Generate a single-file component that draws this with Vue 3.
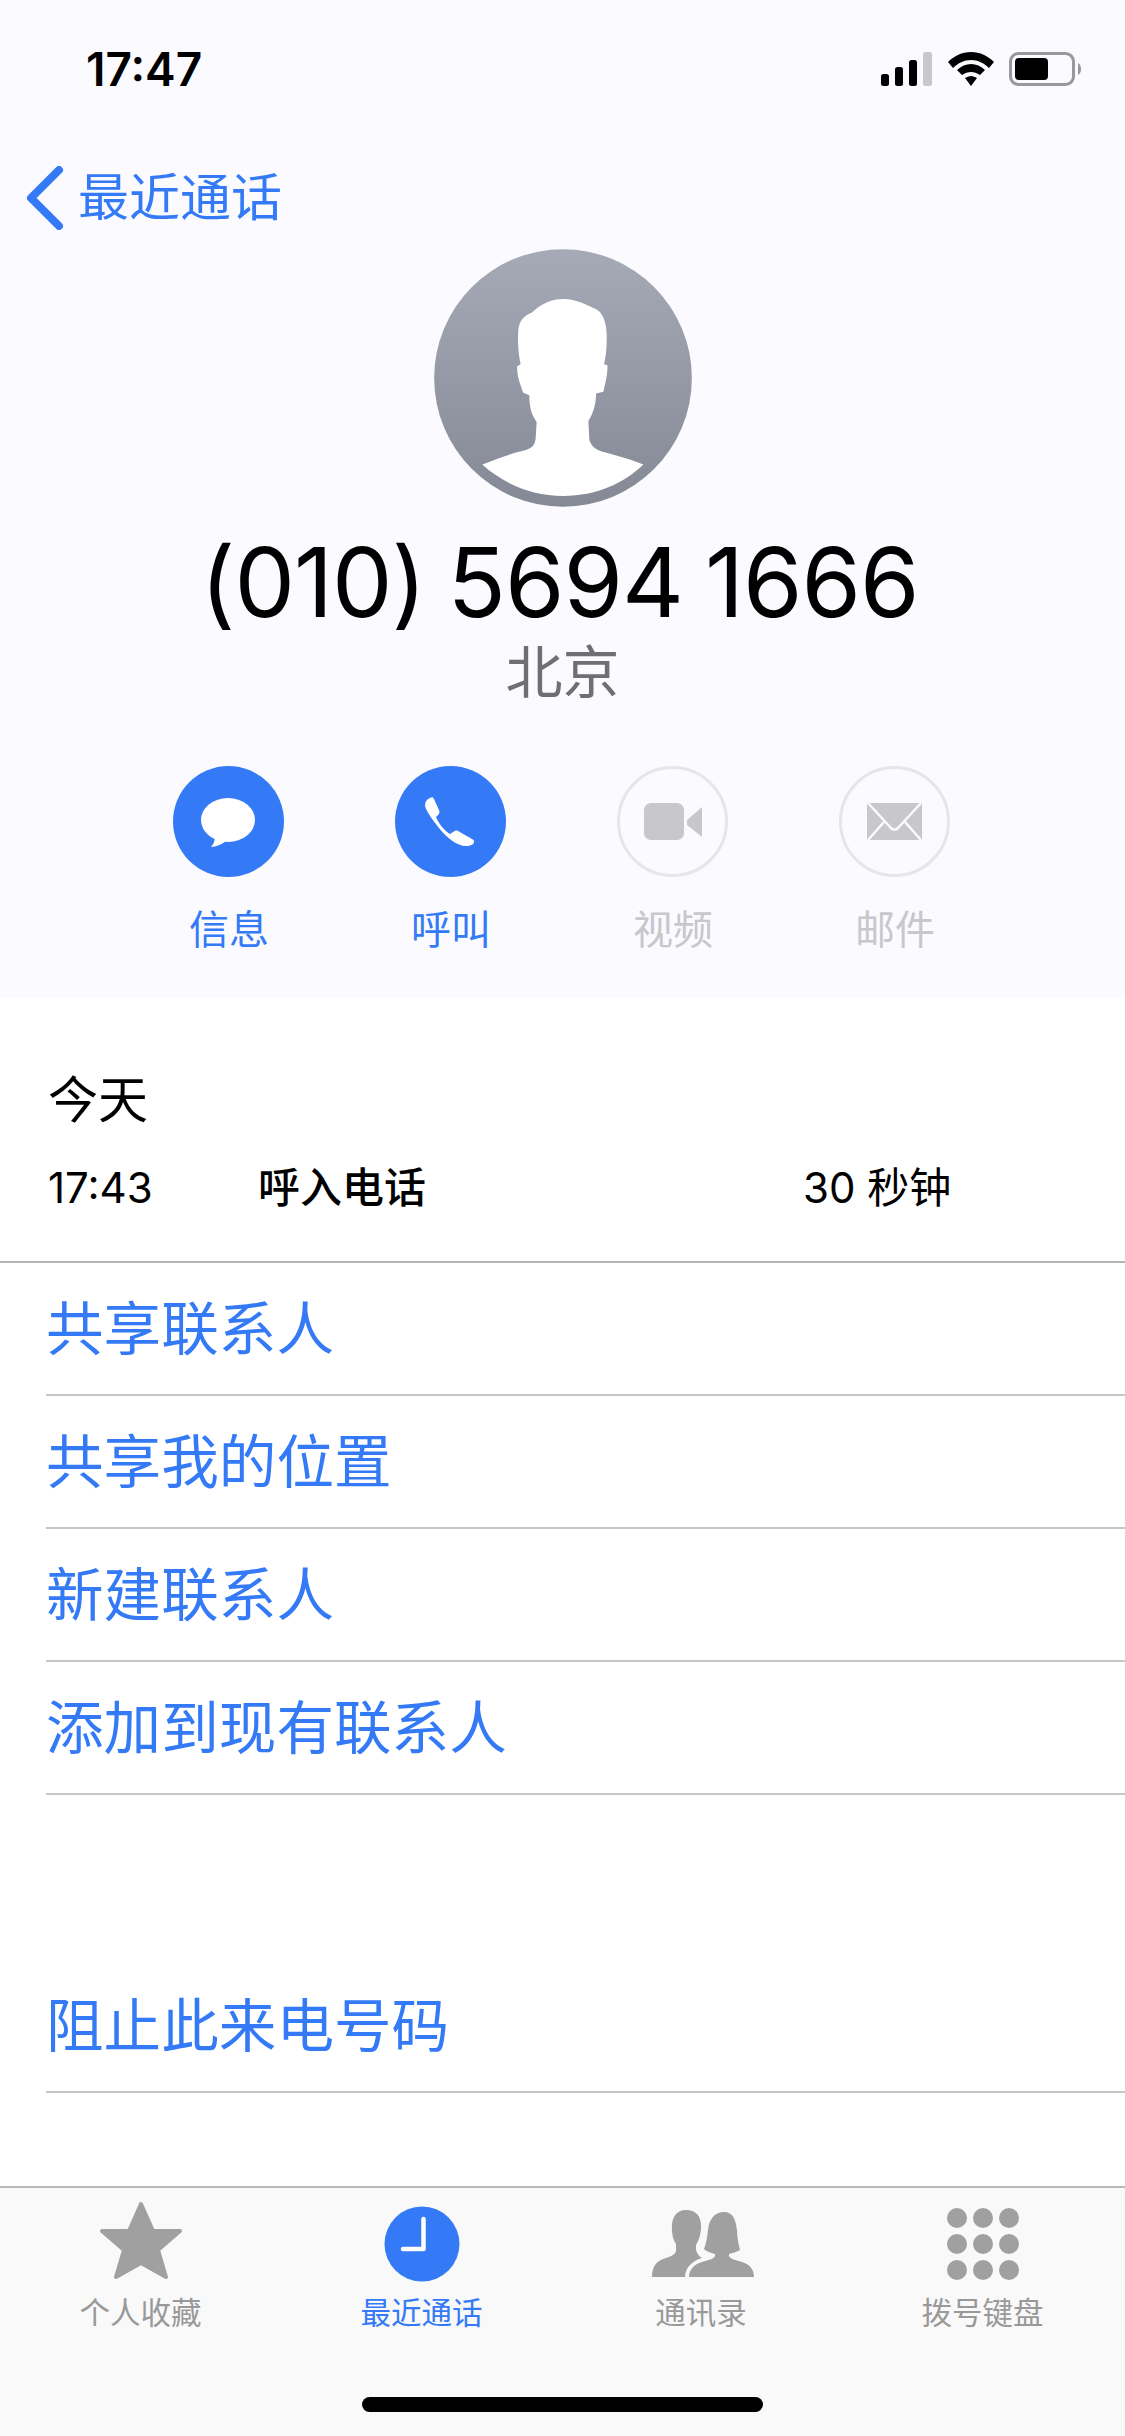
<template>
  <div class="screen">
    <header class="contact">
      <div class="status">
        <span class="clock">17:47</span>
        <div class="status-icons">
          <svg class="signal" width="52" height="34" viewBox="0 0 52 34">
            <rect x="0" y="22" width="8" height="12" rx="2.5" fill="#000" />
            <rect x="14" y="15" width="8" height="19" rx="2.5" fill="#000" />
            <rect x="28" y="8" width="8" height="26" rx="2.5" fill="#000" />
            <rect x="42" y="0" width="9" height="34" rx="2.5" fill="#c7c7cc" />
          </svg>
          <svg class="wifi" width="46" height="34" viewBox="0 0 46 34">
            <path d="M23 0C32 0 40 4 46 10L41 16C36 11 30 8 23 8S10 11 5 16L0 10C6 4 14 0 23 0Z" fill="#000" />
            <path d="M23 12C28 12 33 14 37 18L32 23C29 21 26 20 23 20S17 21 14 23L9 18C13 14 18 12 23 12Z" fill="#000" />
            <path d="M23 24C25 24 27 25 29 26L23 34L17 26C19 25 21 24 23 24Z" fill="#000" />
          </svg>
          <svg class="battery" width="73" height="34" viewBox="0 0 73 34">
            <rect x="1.5" y="1.5" width="63" height="31" rx="8" fill="none" stroke="#98989d" stroke-width="3" />
            <rect x="6" y="6" width="33" height="22" rx="4" fill="#000" />
            <path d="M69 11C71 12 72 14 72 17S71 22 69 23Z" fill="#98989d" />
          </svg>
        </div>
      </div>

      <div class="back">
        <svg width="38" height="64" viewBox="0 0 38 64">
          <path d="M33 4L5 32L33 60" fill="none" stroke="#347af6" stroke-width="8" stroke-linecap="round" stroke-linejoin="round" />
        </svg>
        <span>最近通话</span>
      </div>

      <svg class="avatar" width="258" height="258" viewBox="103 57 772 773">
        <defs>
          <linearGradient id="avatarFill" x1="0" y1="0" x2="0" y2="1">
            <stop offset="0" stop-color="#a6aab6" />
            <stop offset="1" stop-color="#858995" />
          </linearGradient>
        </defs>
        <circle cx="489" cy="443.5" r="386" fill="url(#avatarFill)" />
        <path
          d="M490 207C530 207 560 225 590 238C610 250 620 280 620 320C620 350 618 380 612 402L622 405C624 430 615 460 610 485L588 490C588 520 580 550 565 572L568 630C575 650 590 660 610 665C650 675 695 688 730 703C670 760 590 797 490 797C395 797 310 760 247 703C290 685 340 668 375 660C395 655 405 645 407 625L410 575C395 555 388 530 388 495L370 488C360 460 350 435 352 408L362 402C355 370 353 340 355 300C358 270 375 255 395 248C420 225 450 207 490 207Z"
          fill="#fff" />
      </svg>

      <div class="number">(010) 5694 1666</div>
      <div class="region">北京</div>

      <div class="actions">
        <div v-for="action in actions" :key="action.label" :class="['action', { off: !action.on }]">
          <svg width="111" height="111" viewBox="0 0 111 111">
            <circle v-if="action.on" cx="55.5" cy="55.5" r="55.5" fill="#347af6" />
            <circle v-else cx="55.5" cy="55.5" r="54" fill="none" stroke="#e5e5ea" stroke-width="3" />
            <template v-if="action.icon === 'message'">
              <ellipse cx="55" cy="54" rx="27" ry="22" fill="#fff" />
              <path d="M42 68C42 74 41 78 38 81C43 81 50 78 54 74Z" fill="#fff" />
            </template>
            <path
              v-else-if="action.icon === 'phone'"
              d="M35 32C37 31 38 31 39 33L44 44C45 46 44 48 43 49L41 51C43 57 50 65 55 68L58 66C60 65 61 64 63 65L77 73C79 74 79 75 79 76C79 78 76 80 71 80C62 80 52 72 44 62C36 52 30 43 30 39C30 36 32 33 35 32Z"
              fill="#fff" />
            <template v-else-if="action.icon === 'video'">
              <rect x="27" y="37" width="40" height="37" rx="7" fill="#c7c7cc" />
              <path d="M70 54L85 41V71L70 59Z" fill="#c7c7cc" />
            </template>
            <template v-else>
              <rect x="28" y="37" width="55" height="37" fill="#c7c7cc" />
              <path d="M29 37L52 62C54 64 57 64 59 62L82 37M29 74L45 56M82 74L66 56" fill="none" stroke="#fbfbff" stroke-width="2.5" />
            </template>
          </svg>
          <span>{{ action.label }}</span>
        </div>
      </div>
    </header>

    <section class="recent">
      <div class="day">今天</div>
      <div class="call">
        <span>17:43</span>
        <span class="call-type">呼入电话</span>
        <span>30 秒钟</span>
      </div>
    </section>

    <div class="links">
      <div v-for="link in links" :key="link" class="link"><span>{{ link }}</span></div>
    </div>
    <div class="links block">
      <div class="link"><span>阻止此来电号码</span></div>
    </div>

    <nav class="tabs">
      <div v-for="tab in tabs" :key="tab.label" :class="['tab', { active: tab.active }]">
        <svg width="110" height="88" viewBox="0 0 110 88">
          <polygon
            v-if="tab.icon === 'star'"
            points="55,6 67,33 94,33 72,52 80,79 55,65 30,79 38,52 16,33 43,33"
            fill="#a0a0a0" stroke="#a0a0a0" stroke-width="4" stroke-linejoin="round" />
          <template v-else-if="tab.icon === 'clock'">
            <circle cx="55" cy="46" r="37.5" fill="#347af6" />
            <path d="M56.5 21V51H36" fill="none" stroke="#fff" stroke-width="4.5" stroke-linecap="round" stroke-linejoin="round" />
          </template>
          <g v-else-if="tab.icon === 'people'" transform="translate(6 12)" fill="#a0a0a0">
            <path d="M34 0C44 0 49 6 49 16C49 24 47 30 44 35L44 40C45 44 48 47 50 48C40 51 33 58 33 67L0 67C0 55 6 50 14 48C20 46 24 44 24 40L24 34C21 30 20 24 20 20C19 8 24 0 34 0Z" />
            <path d="M72 2C82 2 84 12 85 20C85 28 87 35 88 40C85 42 80 43 77 44L77 46C78 49 84 50 90 52C98 54 102 60 102 67L37 67C37 60 42 54 50 52C56 50 62 49 63 46L63 44C60 43 55 42 52 39C54 34 55 28 56 20C57 10 62 2 72 2Z" />
          </g>
          <g v-else fill="#a0a0a0">
            <template v-for="y in [20, 46, 72]" :key="y">
              <circle v-for="x in [29, 55, 81]" :key="x" :cx="x" :cy="y" r="10" />
            </template>
          </g>
        </svg>
        <span>{{ tab.label }}</span>
      </div>
      <div class="home-bar"></div>
    </nav>
  </div>
</template>

<script setup>
const actions = [
  { label: '信息', icon: 'message', on: true },
  { label: '呼叫', icon: 'phone', on: true },
  { label: '视频', icon: 'video', on: false },
  { label: '邮件', icon: 'mail', on: false }
]

const links = ['共享联系人', '共享我的位置', '新建联系人', '添加到现有联系人']

const tabs = [
  { label: '个人收藏', icon: 'star' },
  { label: '最近通话', icon: 'clock', active: true },
  { label: '通讯录', icon: 'people' },
  { label: '拨号键盘', icon: 'keypad' }
]
</script>

<style>
html,
body {
  margin: 0;
  background: #fff;
}
</style>

<style scoped>
.screen {
  display: flex;
  flex-direction: column;
  width: 1125px;
  height: 2436px;
  overflow: hidden;
  background: #fff;
  font-family: Inter, "Noto Sans CJK SC", sans-serif;
  color: #000;
}

.contact {
  display: flex;
  flex-direction: column;
  align-items: center;
  height: 998px;
  background: #fbfbff;
  box-sizing: border-box;
  flex-shrink: 0;
}

.status {
  display: flex;
  justify-content: space-between;
  align-items: center;
  align-self: stretch;
  height: 40px;
  margin-top: 49px;
  padding: 0 43px 0 86px;
}

.clock {
  font-size: 46px;
  font-weight: 600;
  line-height: 40px;
}

.status-icons {
  display: flex;
  align-items: center;
  gap: 15px;
}

.back {
  display: flex;
  align-items: center;
  align-self: stretch;
  gap: 14px;
  height: 64px;
  margin-top: 77px;
  padding-left: 26px;
  font-size: 51px;
  line-height: 64px;
  color: #347af6;
}

.avatar {
  margin-top: 19px;
  flex-shrink: 0;
}

.number {
  margin-top: 25px;
  margin-right: 6px;
  font-size: 96px;
  line-height: 100px;
  letter-spacing: -1px;
  word-spacing: -4px;
}

.region {
  margin-top: 11px;
  font-size: 57px;
  line-height: 60px;
  color: #6e6e73;
}

.actions {
  display: grid;
  grid-template-columns: repeat(4, 222px);
  margin-top: 63px;
  margin-left: -3px;
}

.action {
  display: flex;
  flex-direction: column;
  align-items: center;
  gap: 31px;
  font-size: 40px;
  line-height: 44px;
  color: #347af6;
}

.action svg {
  display: block;
}

.action span {
  padding-left: 2px;
}

.action.off {
  color: #c7c7cc;
}

.recent {
  height: 265px;
  box-sizing: border-box;
  padding: 72px 0 0 48px;
  border-bottom: 2px solid #b5b5b8;
  flex-shrink: 0;
}

.day {
  font-size: 50px;
  line-height: 60px;
}

.call {
  display: grid;
  grid-template-columns: 210px 545px auto;
  margin-top: 33px;
  font-size: 42px;
  line-height: 50px;
}

.call-type {
  font-weight: 500;
}

.links {
  flex-shrink: 0;
}

.links.block {
  margin-top: 165px;
}

.link {
  padding-left: 46px;
}

.link span {
  display: block;
  height: 133px;
  box-sizing: border-box;
  border-bottom: 2px solid #c6c6c8;
  font-size: 57.6px;
  line-height: 133px;
  color: #347af6;
}

.tabs {
  position: relative;
  display: grid;
  grid-template-columns: 281px 281px 278px 285px;
  height: 250px;
  box-sizing: border-box;
  margin-top: auto;
  padding-top: 10px;
  background: #f9f9f9;
  border-top: 2px solid #b8b8b8;
}

.tab {
  display: flex;
  flex-direction: column;
  align-items: center;
  gap: 7px;
  font-size: 30.5px;
  line-height: 40px;
  color: #999;
}

.tab svg {
  display: block;
}

.tab.active {
  color: #347af6;
}

.home-bar {
  position: absolute;
  left: 362px;
  top: 209px;
  width: 401px;
  height: 15px;
  border-radius: 8px;
  background: #000;
}
</style>
